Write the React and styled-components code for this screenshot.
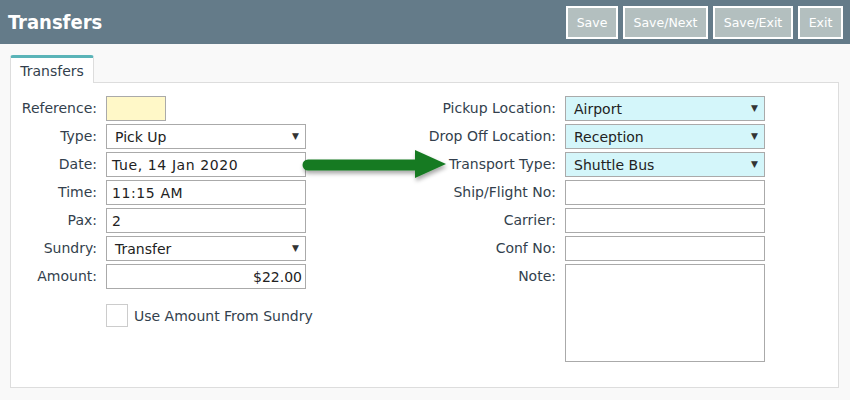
import React from "react";
import styled, { createGlobalStyle } from "styled-components";

const GlobalStyle = createGlobalStyle`
  html, body {
    margin: 0;
    padding: 0;
    background: #f9f9f9;
    font-family: "DejaVu Sans", Verdana, sans-serif;
  }
`;

const Page = styled.div`
  width: 850px;
  height: 400px;
  background: #f9f9f9;
`;

const Header = styled.div`
  height: 44px;
  background: #647b89;
  display: flex;
  align-items: center;
  justify-content: space-between;
  padding: 0 7px 0 8px;
  box-sizing: border-box;
`;

const Title = styled.h1`
  margin: 0;
  color: #fff;
  font-family: "DejaVu Sans Condensed", "DejaVu Sans", sans-serif;
  font-size: 20px;
  font-weight: bold;
`;

const Actions = styled.div`
  display: flex;
  gap: 5px;
`;

const ActionButton = styled.button`
  height: 33px;
  width: ${(p) => p.$w}px;
  padding: 0;
  border: 2px solid #fff;
  background: #b3bfbf;
  color: #fff;
  font-family: inherit;
  font-size: 12.5px;
`;

const Body = styled.div`
  padding: 11px 11px 0 10px;
`;

const Tabs = styled.div`
  display: flex;
  position: relative;
  z-index: 1;
`;

const Tab = styled.div`
  width: 84px;
  height: 28px;
  box-sizing: border-box;
  background: #fff;
  border: 1px solid #ddd;
  border-top: 3px solid #5ab4b8;
  border-bottom: none;
  border-radius: 3px 3px 0 0;
  color: #333f4d;
  font-size: 14px;
  display: flex;
  align-items: center;
  justify-content: center;
  padding-top: 1px;
`;

const Panel = styled.div`
  height: 306px;
  margin-top: -1px;
  box-sizing: border-box;
  background: #fff;
  border: 1px solid #ddd;
  display: flex;
  padding-top: 13px;
  position: relative;
`;

const Column = styled.div`
  display: grid;
  grid-template-columns: ${(p) => p.$label}px 200px;
  column-gap: 9px;
  row-gap: 3px;
  align-content: start;
  margin-left: ${(p) => p.$left}px;
`;

const Label = styled.label`
  text-align: right;
  font-size: 14px;
  color: #333f4d;
  line-height: 25px;
  align-self: start;
  white-space: nowrap;
`;

const Field = styled.div`
  height: ${(p) => p.$h || 25}px;
  width: ${(p) => p.$w || 200}px;
  box-sizing: border-box;
  border: 1px solid #aaa;
  background: ${(p) => p.$bg || "#fff"};
  display: flex;
  align-items: center;
  justify-content: ${(p) => (p.$right ? "flex-end" : "space-between")};
  padding: 0 ${(p) => (p.$right ? 3 : 6)}px 0 ${(p) => (p.$select ? 8 : 5)}px;
  font-size: 14px;
  color: #222;
  letter-spacing: ${(p) => (p.$mono ? "0.6px" : "0")};
`;

const Caret = styled.span`
  font-size: 9px;
  color: #333;
  margin-top: -2px;
`;

const CheckRow = styled.div`
  grid-column: 2;
  display: flex;
  align-items: center;
  gap: 6px;
  margin-top: 12px;
  font-size: 14px;
  color: #333f4d;
  white-space: nowrap;
`;

const Box = styled.span`
  flex: none;
  width: 22px;
  height: 23px;
  box-sizing: border-box;
  border: 1px solid #ccc;
  background: #fff;
`;

const Arrow = styled.svg`
  position: absolute;
  left: 278px;
  top: 61px;
`;

function Select({ value, bg }) {
  return (
    <Field $bg={bg} $select>
      <span>{value}</span>
      <Caret>▼</Caret>
    </Field>
  );
}

export default function App() {
  return (
    <Page>
      <GlobalStyle />
      <Header>
        <Title>Transfers</Title>
        <Actions>
          <ActionButton $w={52}>Save</ActionButton>
          <ActionButton $w={85}>Save/Next</ActionButton>
          <ActionButton $w={80}>Save/Exit</ActionButton>
          <ActionButton $w={45}>Exit</ActionButton>
        </Actions>
      </Header>
      <Body>
        <Tabs>
          <Tab>Transfers</Tab>
        </Tabs>
        <Panel>
          <Column $label={86} $left={0}>
            <Label>Reference:</Label>
            <Field $w={60} $bg="#fff8c8" />
            <Label>Type:</Label>
            <Select value="Pick Up" />
            <Label>Date:</Label>
            <Field $mono>Tue, 14 Jan 2020</Field>
            <Label>Time:</Label>
            <Field $mono>11:15 AM</Field>
            <Label>Pax:</Label>
            <Field>2</Field>
            <Label>Sundry:</Label>
            <Select value="Transfer" />
            <Label>Amount:</Label>
            <Field $right>$22.00</Field>
            <CheckRow>
              <Box />
              Use Amount From Sundry
            </CheckRow>
          </Column>
          <Column $label={150} $left={100}>
            <Label>Pickup Location:</Label>
            <Select value="Airport" bg="#d4f6fa" />
            <Label>Drop Off Location:</Label>
            <Select value="Reception" bg="#d4f6fa" />
            <Label>Transport Type:</Label>
            <Select value="Shuttle Bus" bg="#d4f6fa" />
            <Label>Ship/Flight No:</Label>
            <Field />
            <Label>Carrier:</Label>
            <Field />
            <Label>Conf No:</Label>
            <Field />
            <Label>Note:</Label>
            <Field $h={98} />
          </Column>
          <Arrow width="170" height="50" viewBox="0 0 170 50">
            <defs>
              <filter id="sh" x="-10%" y="-30%" width="130%" height="180%">
                <feDropShadow dx="1" dy="3" stdDeviation="2" floodColor="#000" floodOpacity="0.35" />
              </filter>
            </defs>
            <g filter="url(#sh)">
              <line x1="19" y1="21" x2="130" y2="21" stroke="#177a22" strokeWidth="11" strokeLinecap="round" />
              <polygon points="126,6 157,20 126,34" fill="#177a22" />
            </g>
          </Arrow>
        </Panel>
      </Body>
    </Page>
  );
}
